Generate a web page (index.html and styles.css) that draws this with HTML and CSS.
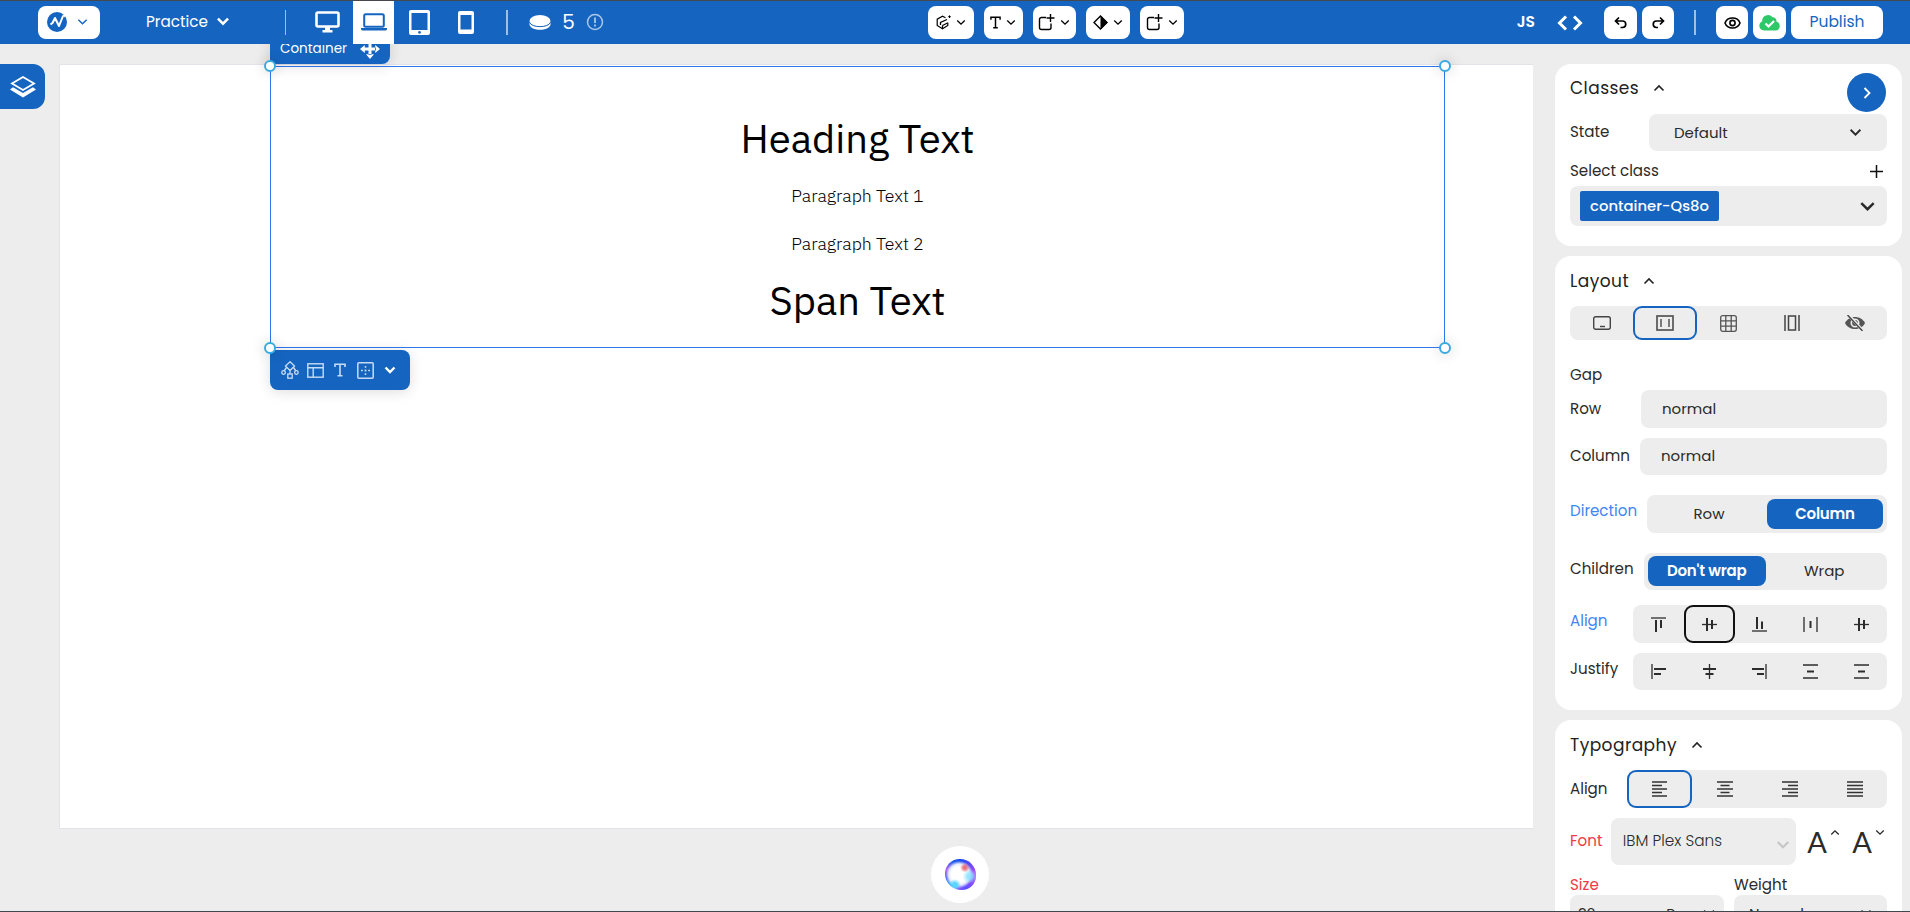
FILE: index.html
```html
<!DOCTYPE html>
<html lang="en">
<head>
<meta charset="utf-8">
<title>Practice</title>
<link rel="stylesheet" href="styles.css">
</head>
<body>
<svg class="defs" width="0" height="0">
  <symbol id="chev" viewBox="0 0 12 8"><path d="M1.5 1.5 6 6l4.500-4.500" fill="none" stroke="currentColor" stroke-width="var(--sw,1.600)"/></symbol>
  <symbol id="addbox" viewBox="0 0 17 17"><path d="M8 3.500H3.500a2 2 0 0 0-2 2v8a2 2 0 0 0 2 2h7.500a2 2 0 0 0 2-2V9.500M12.500 0v8M8.500 4H16.500" fill="none" stroke="currentColor" stroke-width="1.400"/></symbol>
  <symbol id="serif-t" viewBox="0 0 12 14"><path d="M1 4V1.200h10V4M6 1.200v11.600M3.500 12.800h5" fill="none" stroke="currentColor" stroke-width="1.600"/></symbol>
</svg>
<div class="app">
  <header class="topbar">
    <button class="pill logo-btn">
      <svg width="20" height="20" viewBox="0 0 20 20"><circle cx="10" cy="10" r="10" fill="#1565c0"/><path d="M3.500 12.500 5.500 11 8 6l4 8 4-10" fill="none" stroke="#fff" stroke-width="2" stroke-linejoin="round"/><path d="M15 3l3.500-.5-1 3" fill="#fff"/></svg>
      <svg class="blue" width="11" height="8"><use href="#chev"/></svg>
    </button>
    <div class="project"><span>Practice</span><svg class="bold" width="14" height="9"><use href="#chev"/></svg></div>
    <i class="divider thin"></i>
    <nav class="devices">
      <span class="device desktop"><svg width="25" height="22" viewBox="0 0 25 22"><rect x="1.500" y="1.500" width="22" height="14" rx="1.500" fill="none" stroke="#fff" stroke-width="2.600"/><path d="M10 16h5v3h2.500v2.500h-10V19H10z" fill="#fff"/></svg></span>
      <span class="device laptop"><svg width="26" height="18" viewBox="0 0 26 18"><rect x="3.200" y="1.200" width="19.600" height="12.600" rx="1.500" fill="none" stroke="#1565c0" stroke-width="2"/><path d="M0 15h26v1q0 1.500-2 1.500H2Q0 17.500 0 16z" fill="#1565c0"/></svg></span>
      <span class="device tablet"><svg width="21" height="25" viewBox="0 0 21 25"><path fill-rule="evenodd" d="M2 0h17a2 2 0 0 1 2 2v21a2 2 0 0 1-2 2H2a2 2 0 0 1-2-2V2a2 2 0 0 1 2-2zM2.500 3v17h16V3z" fill="#fff"/><circle cx="10.500" cy="22.400" r="1.300" fill="#1565c0"/></svg></span>
      <span class="device phone"><svg width="16" height="23" viewBox="0 0 16 23"><path fill-rule="evenodd" d="M2 0h12a2 2 0 0 1 2 2v19a2 2 0 0 1-2 2H2a2 2 0 0 1-2-2V2a2 2 0 0 1 2-2zM2.500 4v14.500h11V4z" fill="#fff"/></svg></span>
    </nav>
    <i class="divider"></i>
    <div class="credits">
      <svg width="22" height="15" viewBox="0 0 22 15"><ellipse cx="11" cy="6" rx="10.500" ry="6" fill="#fff"/><path d="M.5 7c1 6.300 20 6.300 21 0v2.500c-1 7-20 7-21 0z" fill="#fff"/><path d="M.7 7.500c2 5.500 18.600 5.500 20.600 0" fill="none" stroke="#1565c0"/></svg>
      <b>5</b>
      <svg width="18" height="18" viewBox="0 0 18 18" fill="none" stroke="#a9c7ea" stroke-width="1.500"><circle cx="9" cy="9" r="7.500"/><path d="M9 4.500v5.500M9 11.500v2" stroke-width="1.800"/></svg>
    </div>
    <div class="tools">
      <button class="pill w46"><svg width="15" height="15" viewBox="0 0 15 15" fill="none" stroke="#000" stroke-width="1.200"><path d="M9.500 2.800 6.500 1.200 1.200 4.200v6.300l5.300 3.300 5.300-3.300V7.500"/><path d="M4.500 10V7.500L11 4.500M6.500 10.500l5-2.500M6.500 13V10.500" stroke-width="1.300"/><path d="M12.200 1.700h2.600M13.500.4V3" stroke-width="1"/></svg><svg width="10" height="7"><use href="#chev"/></svg></button>
      <button class="pill w39"><svg width="11" height="13"><use href="#serif-t"/></svg><svg width="10" height="7"><use href="#chev"/></svg></button>
      <button class="pill w43"><svg width="17" height="17"><use href="#addbox"/></svg><svg width="10" height="7"><use href="#chev"/></svg></button>
      <button class="pill w44"><svg width="15" height="15" viewBox="0 0 15 15"><path d="M7.500 1 14 7.500 7.500 14 1 7.500z" fill="none" stroke="#000" stroke-width="1.400"/><path d="M7.500.5v14l7-7z"/></svg><svg width="10" height="7"><use href="#chev"/></svg></button>
      <button class="pill w44"><svg width="17" height="17"><use href="#addbox"/></svg><svg width="10" height="7"><use href="#chev"/></svg></button>
    </div>
    <div class="actions">
      <b class="js">JS</b>
      <svg class="code" width="26" height="16" viewBox="0 0 26 16" fill="none" stroke="#fff" stroke-width="3"><path d="M9 1.500 2.500 8 9 14.500M17 1.500 23.500 8 17 14.500"/></svg>
      <button class="pill w33 undo"><svg width="13" height="13" viewBox="0 0 13 13" fill="none" stroke="#000" stroke-width="1.700"><path d="M5 1.500 1.500 5 5 8.500M1.500 5H8.500a3.200 3.200 0 0 1 0 6.500H6.500"/></svg></button>
      <button class="pill w32 redo"><svg width="13" height="13" viewBox="0 0 13 13" fill="none" stroke="#000" stroke-width="1.700"><path d="M8 1.500 11.500 5 8 8.500M11.500 5H4.500a3.200 3.200 0 0 0 0 6.500H6"/></svg></button>
      <i class="divider"></i>
      <button class="pill w32 eye"><svg width="17" height="12" viewBox="0 0 17 12" fill="none" stroke="#000" stroke-width="1.600"><path d="M1 6c2.500-6.600 12.500-6.600 15 0-2.500 6.600-12.500 6.600-15 0z"/><circle cx="8.500" cy="6" r="2.600"/></svg></button>
      <button class="pill w33 cloud"><svg width="21" height="16" viewBox="0 0 21 16"><path d="M5 15.500a4.800 4.800 0 0 1-1.800-9.200A5.800 5.800 0 0 1 13.500 2.300a3.800 3.800 0 0 1 4 4.400 4.500 4.500 0 0 1-.8 8.800z" fill="#2dc968"/><path d="M6.500 8.500 9.500 11.500 15 6" fill="none" stroke="#fff" stroke-width="2.200"/></svg></button>
      <button class="pill publish">Publish</button>
    </div>
  </header>

  <main class="workspace">
    <aside class="rail">
      <div class="layers"><svg width="26" height="22" viewBox="0 0 26 22"><path d="M13 1 24 7.500 13 14 2 7.500z" fill="none" stroke="#fff" stroke-width="1.800"/><path d="M3 11.300 13 17l10-5.700 3 2.200-13 8-13-8z" fill="#fff"/></svg></div>
      <div class="bug"><svg width="20" height="20" viewBox="0 0 20 20"><path d="M6 4.500a4 4 0 0 1 8 0z"/><path d="M4.500 6h11v8c0 3-2 5-4.700 5.200V7H9.200v12.200C6.500 19 4.500 17 4.500 14z"/><path d="M5 7 1.500 3.500M15 7l3.500-3.500M5 11.500H0M15 11.500h5M5 15l-3.500 4M15 15l3.500 4" stroke="#000" stroke-width="1.700"/></svg></div>
    </aside>
    <section class="stage">
      <div class="canvas">
        <div class="selected">
          <div class="tag"><span>Container</span><svg width="20" height="20" viewBox="0 0 20 20" fill="#fff"><path d="M8.500 4h3v12h-3zM4 8.500h12v3H4zM10 0l4 4.800H6zM10 20l4-4.800H6zM0 10l4.800-4v8zM20 10l-4.800-4v8z"/></svg></div>
          <h1 class="heading">Heading Text</h1>
          <p class="para">Paragraph Text 1</p>
          <p class="para">Paragraph Text 2</p>
          <span class="heading span">Span Text</span>
          <i class="handle tl"></i><i class="handle tr"></i><i class="handle bl"></i><i class="handle br"></i>
          <div class="quickbar">
            <svg width="18" height="18" viewBox="0 0 18 18" fill="none" stroke="#c7dcf3" stroke-width="1.300"><path d="M9 .8 13.500 5 9 9.500 4.500 5zM9 9v4M5.500 6.500 3 10M12.500 6.500 15 10"/><circle cx="2.600" cy="11.500" r="1.800"/><circle cx="15.400" cy="11.500" r="1.800"/><rect x="6.800" y="13" width="4.400" height="4.200"/></svg>
            <svg width="17" height="15" viewBox="0 0 17 15" fill="none" stroke="#c7dcf3" stroke-width="1.400"><rect x=".8" y=".8" width="15.400" height="13.400"/><path d="M1 4.700h15M6.200 4.700V14"/></svg>
            <svg width="12" height="14"><use href="#serif-t"/></svg>
            <svg width="17" height="17" viewBox="0 0 17 17" fill="none" stroke="#c7dcf3" stroke-width="1.500"><rect x=".8" y=".8" width="15.400" height="15.400" rx="1"/><path d="M8.500 4v9M4 8.500h9" stroke-dasharray="1.800"/></svg>
            <svg class="heavy" width="12" height="8"><use href="#chev"/></svg>
          </div>
        </div>
      </div>
      <div class="assistant"><i class="orb"></i></div>
    </section>

    <aside class="panel">
      <section class="card classes">
        <div class="title"><h2>Classes</h2><svg class="up" width="12" height="8"><use href="#chev"/></svg></div>
        <button class="collapse"><svg width="8" height="12" viewBox="0 0 8 12"><path d="M1.500 1 6.500 6l-5 5" fill="none" stroke="#fff" stroke-width="1.800"/></svg></button>
        <div class="row state"><label>State</label><div class="field select"><span>Default</span><svg class="mid" width="13" height="9"><use href="#chev"/></svg></div></div>
        <div class="row between"><label>Select class</label><svg width="13" height="13" viewBox="0 0 13 13"><path d="M6.500 0v13M0 6.500h13" stroke="#111" stroke-width="1.500"/></svg></div>
        <div class="field chooser"><span class="chip">container-Qs8o</span><svg class="mid" width="17" height="11"><use href="#chev"/></svg></div>
      </section>

      <section class="card layout">
        <div class="title"><h2>Layout</h2><svg class="up" width="12" height="8"><use href="#chev"/></svg></div>
        <div class="field segs tabs">
          <span class="seg"><svg width="18" height="14" viewBox="0 0 18 14" fill="none" stroke="#444" stroke-width="1.400"><rect x=".7" y=".7" width="16.600" height="12.600" rx="2"/><path d="M7 10.500h5"/></svg></span>
          <span class="seg on"><svg width="18" height="16" viewBox="0 0 18 16" fill="none" stroke="#555" stroke-width="1.700"><rect x="1" y="1" width="16" height="14"/><path d="M5 4v8M13 4v8" stroke-width="1.500"/></svg></span>
          <span class="seg"><svg width="17" height="17" viewBox="0 0 17 17" fill="none" stroke="#555" stroke-width="1.300"><rect x=".7" y=".7" width="15.600" height="15.600" rx="2"/><path d="M5.800 1v15M11.200 1v15M1 5.800h15M1 11.200h15"/></svg></span>
          <span class="seg"><svg width="16" height="16" viewBox="0 0 16 16" fill="none" stroke="#444" stroke-width="1.500"><path d="M1 0v16M15 0v16"/><rect x="4.500" y="1" width="7" height="14"/></svg></span>
          <span class="seg"><svg width="20" height="16" viewBox="0 0 20 16"><path d="M0 8c4-8 16-8 20 0-4 8-16 8-20 0z" fill="#555"/><circle cx="10" cy="8" r="3.700" fill="#555" stroke="#ededed" stroke-width="1.600"/><path d="M3.500 0 18 16" stroke="#ededed" stroke-width="3"/><path d="M2.500 0 17.500 16" stroke="#444" stroke-width="1.400"/></svg></span>
        </div>
        <label class="gap">Gap</label>
        <div class="row r-row"><label>Row</label><div class="field input">normal</div></div>
        <div class="row r-col"><label>Column</label><div class="field input">normal</div></div>
        <div class="row r-dir"><label class="blue-label">Direction</label><div class="field toggle"><span>Row</span><span class="active">Column</span></div></div>
        <div class="row r-child"><label>Children</label><div class="field toggle"><span class="active">Don't wrap</span><span>Wrap</span></div></div>
        <div class="row r-align"><label class="blue-label">Align</label><div class="field segs glyphs">
          <span class="seg"><svg viewBox="0 0 15 15"><path d="M0 1h15"/><path class="th" d="M5 3v12M10 3v8"/></svg></span>
          <span class="seg dark"><svg viewBox="0 0 15 15"><path d="M0 7.500h15"/><path class="th" d="M5 1v13M10 3v9"/></svg></span>
          <span class="seg"><svg viewBox="0 0 15 15"><path d="M0 14h15"/><path class="th" d="M5 0v12M10 4.500V12"/></svg></span>
          <span class="seg"><svg viewBox="0 0 15 15"><path d="M1 0v15M14 0v15"/><path class="th" d="M7.500 4v7"/></svg></span>
          <span class="seg"><svg viewBox="0 0 15 15"><path d="M0 7.500h15"/><path class="th" d="M5 1v13M10 3v9"/></svg></span>
        </div></div>
        <div class="row r-just"><label>Justify</label><div class="field segs glyphs">
          <span class="seg"><svg viewBox="0 0 15 15"><path d="M1 0v15"/><path class="th" d="M3 5h12M3 10h7"/></svg></span>
          <span class="seg"><svg viewBox="0 0 15 15"><path d="M7.500 0v15"/><path class="th" d="M1 5h13M3.500 10h8"/></svg></span>
          <span class="seg"><svg viewBox="0 0 15 15"><path d="M14 0v15"/><path class="th" d="M0 5h12M5 10h7"/></svg></span>
          <span class="seg"><svg viewBox="0 0 15 15"><path d="M0 1h15M0 14h15"/><path class="th" d="M4 7.500h7"/></svg></span>
          <span class="seg"><svg viewBox="0 0 15 15"><path d="M0 1h15M0 14h15"/><path class="th" d="M4 7.500h7"/></svg></span>
        </div></div>
      </section>

      <section class="card typo">
        <div class="title"><h2>Typography</h2><svg class="up" width="12" height="8"><use href="#chev"/></svg></div>
        <div class="row r-text"><label>Align</label><div class="field segs">
          <span class="seg on"><svg class="lines" viewBox="0 0 16 16"><path d="M0 1h15M0 4.500h10M0 8h15M0 11.500h10M0 15h15"/></svg></span>
          <span class="seg"><svg class="lines" viewBox="0 0 16 16"><path d="M0 1h16M3.500 4.500h9M0 8h16M3.500 11.500h9M0 15h16"/></svg></span>
          <span class="seg"><svg class="lines" viewBox="0 0 16 16"><path d="M0 1h16M6 4.500h10M0 8h16M6 11.500h10M0 15h16"/></svg></span>
          <span class="seg"><svg class="lines" viewBox="0 0 16 16"><path d="M0 1h16M0 4.500h16M0 8h16M0 11.500h16M0 15h16"/></svg></span>
        </div></div>
        <div class="row r-font"><label class="red-label">Font</label><div class="field fontbox"><span>IBM Plex Sans</span><svg class="mid" width="14" height="10"><use href="#chev"/></svg></div>
          <div class="bump"><span>A</span><svg class="up" width="10" height="7"><use href="#chev"/></svg></div>
          <div class="bump"><span>A</span><svg width="10" height="7"><use href="#chev"/></svg></div>
        </div>
        <div class="pair">
          <div><label class="red-label">Size</label><div class="field num"><span>32</span><span class="unit">Px</span><svg class="mid" width="14" height="9"><use href="#chev"/></svg></div></div>
          <div><label class="weight">Weight</label><div class="field num wt"><span>Normal</span><svg width="12" height="8"><use href="#chev"/></svg></div></div>
        </div>
      </section>
    </aside>
  </main>
</div>
</body>
</html>
```
FILE: styles.css
```css
* { box-sizing: border-box; }
body { margin: 0; background: #ededed; color: #2b2b2b; font-family: Poppins, Inter, sans-serif; font-size: 15px; }
svg { display: block; flex: none; }
button { border: 0; padding: 0; font: inherit; }
h1, h2, p { margin: 0; font-weight: 400; }
.defs { position: absolute; }
.app { height: 912px; overflow: hidden; display: flex; flex-direction: column; border-top: 1px solid #45494e; border-bottom: 1px solid #3f474f; }

.topbar { height: 43px; flex: none; display: flex; align-items: center; background: #1565c0; color: #fff; position: relative; z-index: 2; }
.pill { height: 33px; border-radius: 8px; background: #fff; color: #000; display: flex; align-items: center; justify-content: center; gap: 5px; }
.logo-btn { width: 62px; margin-left: 38px; gap: 10px; padding: 0 3px 1px 0; }
.blue { color: #1565c0; }
.project { width: 84px; margin-left: 46px; display: flex; align-items: center; justify-content: space-between; font-size: 15.200px; padding-bottom: 2px; }
.bold { --sw: 2.2; }
.divider { width: 2px; height: 25px; background: #9fc0e6; }
.divider.thin { width: 1px; margin-left: 55px; }
.devices { display: flex; align-self: stretch; margin-left: 20px; }
.device { display: flex; align-items: center; justify-content: center; padding-bottom: 1px; }
.desktop { width: 47px; padding-right: 5px; }
.laptop { width: 41px; background: #fff; }
.tablet { width: 50px; }
.phone { width: 44px; }
.devices + .divider { margin-left: 18px; }
.credits { display: flex; align-items: center; margin-left: 21px; width: 75px; justify-content: space-between; padding-bottom: 1px; }
.credits b { font-size: 20px; font-weight: 400; }
.tools { display: flex; gap: 10px; margin-left: 324px; }
.w46 { width: 46px; } .w39 { width: 39px; } .w43 { width: 43px; } .w44 { width: 44px; } .w33 { width: 33px; } .w32 { width: 32px; }
.tools .pill { padding: 0 1px 1px 0; }
.actions { display: flex; align-items: center; margin-left: auto; margin-right: 27px; }
.js { font-size: 15.500px; padding-bottom: 2px; font-weight: 600; }
.code { margin-left: 22px; }
.undo { margin-left: 21px; }
.redo { margin-left: 5px; }
.actions .divider { margin: 0 20px; }
.cloud { margin: 0 5px; }
.publish { width: 92px; color: #1565c0; font-size: 15.500px; padding-bottom: 2px; }

.workspace { flex: 1; min-height: 0; display: grid; grid-template-columns: 59px 1474px 347px; column-gap: 0; }
.rail { display: flex; flex-direction: column; justify-content: space-between; padding-top: 20px; }
.layers { width: 45px; height: 45px; border-radius: 0 12px 12px 0; background: #1565c0; display: flex; align-items: center; justify-content: center; }
.bug { width: 50px; height: 48px; border-radius: 0 6px 0 0; background: #fff; box-shadow: 0 0 12px #0003; display: flex; align-items: center; justify-content: center; }
.stage { padding-top: 20px; display: flex; flex-direction: column; align-items: center; }
.canvas { width: 1474px; height: 765px; background: #fff; border: 1px solid #e2e4ea; border-right: 0; padding: 1px 0 0 210px; }
.selected { position: relative; width: 1175px; height: 282px; border: 1px solid #2f7af0; display: flex; flex-direction: column; align-items: center; padding-top: 45px; color: #000; font-family: "IBM Plex Sans", "Noto Sans", sans-serif; }
.heading { font-size: 40px; line-height: 52px; }
.para { font-size: 17.700px; line-height: 24px; margin-top: 20px; font-weight: 300; }
.para + .para { margin-top: 24px; }
.span { margin-top: 18px; }
.tag { position: absolute; left: -1px; top: -32px; width: 120px; height: 29px; border-radius: 0 0 8px 0; background: #1565c0; color: #fff; display: flex; align-items: center; gap: 14px; padding: 0 9px 2px 10px; box-shadow: 0 2px 14px #0002; font: 400 13.500px Poppins, Inter, sans-serif; }
.tag span { width: 66px; }
.handle { position: absolute; width: 12px; height: 12px; border: 2px solid #3aa9e0; border-radius: 50%; background: #fff; box-shadow: 0 0 14px #0003; z-index: 1; }
.tl { left: -7px; top: -7px; } .tr { right: -7px; top: -7px; } .bl { left: -7px; bottom: -7px; } .br { right: -7px; bottom: -7px; }
.quickbar { position: absolute; left: -1px; top: 283px; width: 140px; height: 40px; border-radius: 0 8px 8px 8px; background: #1565c0; color: #c7dcf3; display: grid; grid-template-columns: repeat(5, 25px); align-items: center; justify-items: center; padding-left: 7.500px; box-shadow: 0 2px 14px #0002; }
.heavy { color: #fff; --sw: 2.4; }
.assistant { width: 58px; height: 57px; margin: 17px 0 0 872px; align-self: flex-start; border-radius: 50%; background: #fff; display: flex; align-items: center; justify-content: center; }
.orb { width: 31px; height: 31px; border-radius: 48% 52% 46% 54%; filter: blur(.7px); background: radial-gradient(circle at 64% 28%, #e8505fcc 0 5%, transparent 16%), radial-gradient(circle at 80% 56%, #7fe2ffcc 0 8%, transparent 24%), radial-gradient(circle at 32% 84%, #58d4ff 0 6%, transparent 18%), radial-gradient(circle at 46% 50%, #fff 0 34%, #e6ecff 46%, #ffffff00 60%), conic-gradient(#1c4bf0, #5a48f5 40deg, #c050ff 90deg, #8b4bff 125deg, #5a50ff 160deg, #8d58ff 190deg, #3bb4ff 225deg, #5058f5 260deg, #b45cf5 290deg, #1d5cf0 330deg, #1c4bf0); }

.panel { margin-left: 22px; width: 347px; padding-top: 20px; display: flex; flex-direction: column; gap: 10px; }
.card { position: relative; flex: none; background: #fff; border-radius: 16px; padding: 0 15px; }
.classes { height: 182px; } .layout { height: 454px; } .typo { height: 300px; }
.title { height: 50px; display: flex; align-items: center; gap: 14px; color: #222; }
.classes .title { padding-bottom: 2px; }
h2 { font-size: 17px; letter-spacing: .45px; }
.up { transform: rotate(180deg); }
.collapse { position: absolute; right: 16px; top: 9px; width: 39px; height: 39px; border-radius: 50%; background: #1565c0; display: flex; align-items: center; justify-content: center; }
label { line-height: 20px; font-size: 15.100px; padding-bottom: 1px; }
.field { background: #ededed; border-radius: 8px; display: flex; align-items: center; }
.row { display: flex; align-items: center; justify-content: space-between; }
.state .field { width: 238px; height: 37px; padding: 0 25px 0 25px; justify-content: space-between; }
.state label { padding-bottom: 1px; }
.mid { --sw: 1.8; }
.between { height: 35px; padding: 5px 4px 0 0; }
.chooser { height: 40px; padding: 0 11px 0 10px; justify-content: space-between; }
.chip { height: 30px; width: 139px; border-radius: 2px; background: #1565c0; color: #fff; display: flex; align-items: center; justify-content: center; font-weight: 500; font-size: 14.800px; padding-bottom: 1px; }
.seg { flex: 1; align-self: stretch; display: flex; align-items: center; justify-content: center; border-radius: 9px; }
.seg.on { box-shadow: inset 0 0 0 2px #1565c0; }
.seg.dark { box-shadow: inset 0 0 0 2px #111; }
.tabs { height: 34px; }
.gap { display: block; margin-top: 25px; height: 25px; }
.input { padding: 0 0 2px 21px; }
.r-row .field { width: 246px; height: 38px; }
.r-col { margin-top: 10px; } .r-col .field { width: 247px; height: 37px; }
.r-dir { margin-top: 20px; } .r-dir .field { width: 240px; height: 38px; }
.r-child { margin-top: 20px; } .r-child .field { width: 243px; height: 37px; }
.r-align { margin-top: 15px; } .r-align .field { width: 254px; height: 38px; }
.r-just { margin-top: 10px; } .r-just .field { width: 254px; height: 37px; }
.r-col label { padding-bottom: 2px; }
.r-dir label, .r-child label, .r-align label, .r-just label { padding-bottom: 6px; }
.toggle { padding: 0 4px; }
.toggle span { flex: 1; height: 30px; border-radius: 8px; display: flex; align-items: center; justify-content: center; padding-bottom: 1px; }
.r-child .toggle { padding-bottom: 1px; }
.toggle .active { background: #1565c0; color: #fff; font-weight: 600; letter-spacing: -.2px; }
.blue-label { color: #4285f4; } .red-label { color: #f03b43; }
.glyphs svg { width: 15px; height: 15px; stroke: #2c2c2c; stroke-width: 1.300; fill: none; }
.glyphs .th { stroke-width: 2; }
.lines { width: 16px; height: 16px; stroke: #333; stroke-width: 1.500; }
.r-text .field { width: 260px; height: 38px; }
.r-font { margin-top: 10px; height: 47px; justify-content: flex-start; }
.r-font label { width: 41px; padding-bottom: 2px; }
.fontbox { width: 186px; height: 47px; padding: 0 6px 0 12px; justify-content: space-between; font-weight: 300; font-size: 15.300px; }
.fontbox span { padding-bottom: 2px; }
.fontbox .mid { color: #c6c6c6; margin-top: 6px; }
.bump { display: flex; margin-left: 11px; width: 35px; font: 29px/47px Lato, sans-serif; gap: 3px; }
.bump + .bump { margin-left: 10px; }
.bump svg { margin-top: 11px; }
.pair { display: grid; grid-template-columns: 154px 153px; gap: 10px; padding-top: 10px; }
.pair label { display: block; padding: 0; }
.num { height: 36px; padding: 0 8px; }
.num .unit { margin-left: auto; margin-right: 20px; }
.wt { padding: 0 15px; justify-content: space-between; }
```
